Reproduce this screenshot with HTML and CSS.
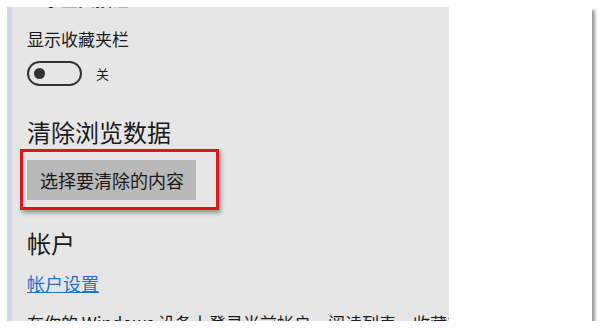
FILE: index.html
```html
<!DOCTYPE html>
<html lang="zh-CN">
<head>
    <meta charset="UTF-8">
    <title>设置</title>
    <link rel="stylesheet" href="styles.css">
</head>
<body>
    <div class="frame">
        <div class="panel">
            <div class="cut-line">显示主页按钮</div>

            <div class="label">显示收藏夹栏</div>
            <div class="toggle-row">
                <div class="toggle"><span class="knob"></span></div>
                <span class="toggle-text">关</span>
            </div>

            <h2>清除浏览数据</h2>
            <div class="highlight">
                <button class="btn">选择要清除的内容</button>
            </div>

            <h2 class="account">帐户</h2>
            <a href="#" class="link">帐户设置</a>

            <div class="desc">在你的 Windows 设备上登录当前帐户，阅读列表、收藏夹</div>
        </div>
        <div class="side"></div>
    </div>
</body>
</html>
```

FILE: styles.css
```css
* {
    margin: 0;
    padding: 0;
    box-sizing: border-box;
}

body {
    background: white;
    font-family: "Noto Sans CJK SC", "Noto Sans", sans-serif;
    color: #1a1a1a;
}

.frame {
    display: flex;
    width: 585px;
    height: 314px;
    margin: 7px 0 0 7px;
    border-left: 5px solid #cfd9ea;
    box-shadow: 3px 3px 3px rgba(0,0,0,0.4);
}

.panel {
    width: 437px;
    background: #e6e6e6;
    overflow: hidden;
    padding-left: 15px;
}

.side {
    flex: 1;
    background: white;
}

.cut-line {
    font-size: 17px;
    line-height: 22px;
    margin-top: -19px;
}

.label {
    font-size: 17px;
    line-height: 22px;
    margin-top: 18px;
}

.toggle-row {
    display: flex;
    align-items: center;
    gap: 14px;
    margin-top: 11px;
}

.toggle {
    width: 55px;
    height: 25px;
    border: 2px solid #333;
    border-radius: 13px;
    display: flex;
    align-items: center;
    padding-left: 5px;
}

.knob {
    width: 11px;
    height: 11px;
    border-radius: 50%;
    background: #333;
}

.toggle-text {
    font-size: 13px;
}

h2 {
    font-size: 24px;
    font-weight: normal;
    line-height: 30px;
    margin-top: 31px;
}

.highlight {
    display: inline-block;
    margin: 2px 0 0 -7px;
    padding: 8px 20px 7px 4px;
    border: 3px solid #e8121a;
    box-shadow: 2px 3px 4px rgba(0,0,0,0.35);
}

.btn {
    display: block;
    background: #b9b9b9;
    border: none;
    font-family: inherit;
    font-size: 18px;
    color: #1a1a1a;
    height: 40px;
    padding: 0 12px 0 13px;
}

h2.account {
    margin-top: 18px;
}

.link {
    display: inline-block;
    font-size: 18px;
    line-height: 24px;
    margin-top: 13px;
    color: #1f72c9;
}

.desc {
    font-size: 17px;
    margin-top: 14px;
    white-space: nowrap;
}
```
